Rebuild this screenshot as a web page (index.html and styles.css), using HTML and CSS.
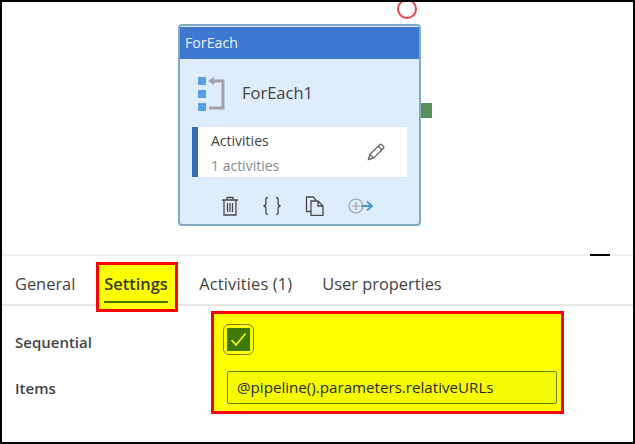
FILE: index.html
```html
<!DOCTYPE html>
<html lang="en">
<head>
<meta charset="utf-8">
<title>ForEach settings</title>
<link rel="stylesheet" href="styles.css">
</head>
<body>
<div class="frame">
  <section class="canvas">
    <span class="marker"></span>
    <div class="card">
      <div class="card-head">ForEach</div>
      <div class="card-title">
        <svg class="loop" width="30" height="36" viewBox="0 0 30 36">
          <rect x="1" y="0" width="8" height="8" fill="#5a9fe3"/>
          <rect x="1" y="13" width="8" height="8" fill="#5a9fe3"/>
          <rect x="1" y="26" width="8" height="8" fill="#5a9fe3"/>
          <path d="M14 4H26V31H12" fill="none" stroke="#a3a3a3" stroke-width="3"/>
          <path d="M11 4l6-4v8z" fill="#a3a3a3"/>
        </svg>
        <span class="name">ForEach1</span>
      </div>
      <div class="activities">
        <div class="activities-text">
          <span class="act-title">Activities</span>
          <span class="act-sub">1 activities</span>
        </div>
        <svg class="pencil" width="18" height="18" viewBox="0 0 18 18">
          <path d="M1.5 16.5l1.3-5L12.6 1.7a1.5 1.5 0 0 1 2.1 0l1.600 1.600a1.5 1.5 0 0 1 0 2.100L6.500 15.200zM2.800 11.500l3.700 3.700M11.300 3l3.700 3.700" fill="none" stroke="#6a6a6a" stroke-width="1.400"/>
        </svg>
      </div>
      <div class="actions">
        <svg width="18" height="20" viewBox="0 0 18 20">
          <path d="M1 4H17M6 4V1.500H12V4M3 4V19H15V4M6.500 7V16M9 7V16M11.500 7V16" fill="none" stroke="#4a4a4a" stroke-width="1.300"/>
        </svg>
        <svg width="20" height="20" viewBox="0 0 20 20">
          <path d="M6 1.500C3 1.500 4 4 4 7C4 9 3 10 1.500 10C3 10 4 11 4 13C4 16 3 18.500 6 18.500M14 1.500C17 1.500 16 4 16 7C16 9 17 10 18.500 10C17 10 16 11 16 13C16 16 17 18.500 14 18.500" fill="none" stroke="#4a4a4a" stroke-width="1.300"/>
        </svg>
        <svg width="20" height="20" viewBox="0 0 20 20">
          <path d="M6 15.500H1.500V1H8L11 4M6 5H13L18 10V19.500H6zM13 5V10H18" fill="none" stroke="#4a4a4a" stroke-width="1.300"/>
        </svg>
        <svg width="26" height="16" viewBox="0 0 26 16">
          <circle cx="8" cy="8" r="7" fill="none" stroke="#a0a0a0" stroke-width="1.200"/>
          <path d="M4 8H12M8 4V12" fill="none" stroke="#a0a0a0" stroke-width="1.200"/>
          <path d="M13 8H24M19 3.500L24 8L19 12.500" fill="none" stroke="#3f9bd0" stroke-width="1.800"/>
        </svg>
      </div>
    </div>
    <span class="port"></span>
  </section>
  <section class="panel">
    <span class="dash"></span>
    <nav class="tabs">
      <span class="tab">General</span>
      <span class="tab tab-active"><span class="tab-label">Settings</span></span>
      <span class="tab tab-activities">Activities (1)</span>
      <span class="tab tab-user">User properties</span>
    </nav>
    <div class="form">
      <div class="labels">
        <span class="label label-seq">Sequential</span>
        <span class="label label-items">Items</span>
      </div>
      <div class="fields">
        <span class="check-ring">
          <span class="check">
            <svg width="17" height="15" viewBox="0 0 17 15">
              <path d="M1.500 8L6 13L15.500 1.500" fill="none" stroke="#ffff00" stroke-width="1.500"/>
            </svg>
          </span>
        </span>
        <div class="input">@pipeline().parameters.relativeURLs</div>
      </div>
    </div>
  </section>
</div>
</body>
</html>
```

FILE: styles.css
```css
* { box-sizing: border-box; }
html, body { margin: 0; padding: 0; }
body {
  width: 635px;
  height: 444px;
  overflow: hidden;
  background: #fff;
  font-family: "Open Sans", "Noto Sans", "Liberation Sans", sans-serif;
}
.frame {
  width: 635px;
  height: 444px;
  border: 2px solid #000;
  display: flex;
  flex-direction: column;
  overflow: hidden;
}
.canvas {
  position: relative;
  height: 252px;
  flex: none;
}
.marker {
  position: absolute;
  left: 395px;
  top: -3px;
  width: 20px;
  height: 20px;
  border: 2px solid #e8434a;
  border-radius: 50%;
}
.card {
  position: absolute;
  left: 176px;
  top: 22px;
  width: 243px;
  height: 202px;
  background: #deedfb;
  border: 2px solid #7fabc4;
  border-radius: 4px;
  display: flex;
  flex-direction: column;
  overflow: hidden;
}
.card-head {
  height: 32px;
  flex: none;
  margin-top: 1px;
  background: #3f78d0;
  color: #e8f0fb;
  font-size: 14.200px;
  line-height: 32px;
  padding-left: 5px;
}
.card-title {
  height: 68px;
  flex: none;
  display: flex;
  align-items: center;
  padding: 4px 0 0 17px;
  gap: 15px;
}
.name { font-size: 16.500px; color: #444; padding-bottom: 6px; }
.activities {
  margin-left: 12px;
  width: 215px;
  height: 50px;
  flex: none;
  background: #fff;
  border-left: 6px solid #3a6cb8;
  display: flex;
  align-items: center;
  justify-content: space-between;
  padding: 0 22px 0 13px;
}
.activities-text { display: flex; flex-direction: column; gap: 5px; padding-top: 2px; }
.act-title { font-size: 14px; line-height: 20px; color: #444; }
.act-sub { font-size: 14px; line-height: 20px; color: #8a8a8a; }
.actions {
  flex: 1;
  display: flex;
  align-items: center;
  padding: 10px 0 0 41px;
  gap: 23px;
}
.port {
  position: absolute;
  left: 419px;
  top: 101px;
  width: 11px;
  height: 15px;
  background: #5b8f5a;
}
.panel {
  position: relative;
  flex: 1;
  border-top: 2px solid #eee;
}
.dash {
  position: absolute;
  left: 588px;
  top: -2px;
  width: 20px;
  height: 2px;
  background: #000;
}
.tabs {
  height: 50px;
  display: flex;
  border-bottom: 2px solid #e6e6e6;
  font-size: 16.400px;
  color: #444;
  padding-left: 13px;
}
.tab { line-height: 56px; height: 50px; }
.tab-active {
  position: relative;
  z-index: 1;
  margin-left: 21px;
  flex: none;
  width: 82px;
  height: 50px;
  margin-top: 6px;
  background: #ff0;
  border: 3px solid #f00;
  line-height: 38px;
  padding-left: 5px;
  font-weight: 600;
  color: #3a3a10;
}
.tab-label {
  display: block;
  width: 64px;
  height: 38px;
  border-bottom: 2px solid #3f7a00;
}
.tab-activities { margin-left: 21px; letter-spacing: 0.15px; }
.tab-user { margin-left: 30px; }
.form {
  display: flex;
  padding-left: 13px;
}
.labels {
  width: 196px;
  display: flex;
  flex-direction: column;
  font-size: 15px;
  font-weight: 600;
  color: #444;
}
.label-seq { margin-top: 25px; line-height: 22px; }
.label-items { margin-top: 24px; line-height: 22px; }
.fields {
  width: 353px;
  height: 103px;
  margin-top: 5px;
  background: #ff0;
  border: 3px solid #f00;
  padding: 10px 0 0 9px;
  display: flex;
  flex-direction: column;
}
.check-ring {
  width: 31px;
  height: 31px;
  border: 1px solid #7f7f00;
  border-radius: 6px;
  display: flex;
  align-items: center;
  justify-content: center;
}
.check {
  width: 23px;
  height: 23px;
  background: #3f7a00;
  display: flex;
  align-items: center;
  justify-content: center;
}
.input {
  margin: 16px 0 0 4px;
  width: 330px;
  height: 33px;
  background: #f4fa00;
  border: 1px solid #5a8a00;
  border-radius: 2px;
  font-size: 15.150px;
  line-height: 31px;
  padding-left: 9px;
  color: #2a2a2a;
}
```
